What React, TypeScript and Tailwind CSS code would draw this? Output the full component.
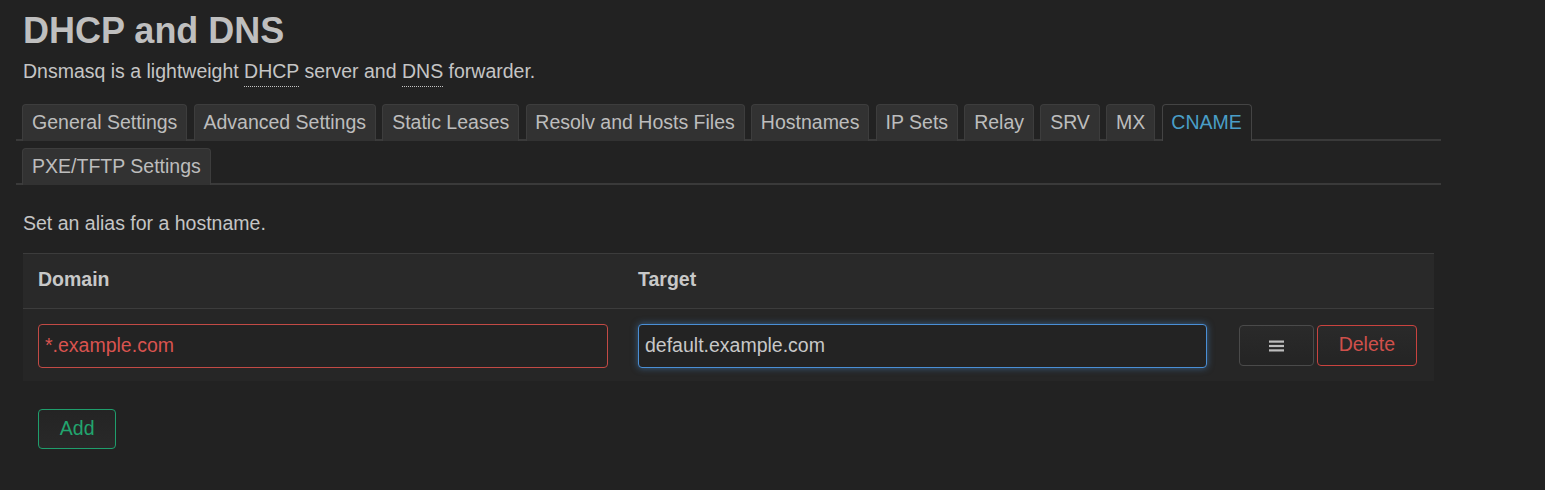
import React from "react";

const row1 = [
  "General Settings",
  "Advanced Settings",
  "Static Leases",
  "Resolv and Hosts Files",
  "Hostnames",
  "IP Sets",
  "Relay",
  "SRV",
  "MX",
  "CNAME",
];

function Tab({ label, active }: { label: string; active?: boolean }) {
  return (
    <div
      className={
        active
          ? "-mb-[2px] rounded-t-[4px] border border-b-0 border-[#444444] bg-[#222222] px-[8.8px] pt-[3px] pb-[3.8px] text-[#4a9ec7] whitespace-nowrap"
          : "-mb-[2px] rounded-t-[4px] border border-b-0 border-[#3d3d3d] bg-[#323232] px-[8.8px] pt-[3px] pb-[3.8px] text-[#bdbdbd] whitespace-nowrap"
      }
    >
      {label}
    </div>
  );
}

function Abbr({ children }: { children: React.ReactNode }) {
  return (
    <span className="border-b border-dotted border-[#c5c5c5] pb-[4px]">{children}</span>
  );
}

export default function App() {
  return (
    <div className="min-h-screen bg-[#222222] font-['Liberation_Sans',Arial,sans-serif] text-[19.5px] leading-[1.5] text-[#c5c5c5]">
      <div className="ml-[16px] w-[1425px]">
        <h2 className="px-[7px] pt-[10.5px] text-[36px] font-bold leading-[40px] text-[#bfbfbf]">
          DHCP and DNS
        </h2>
        <p className="mt-[6px] px-[7px]">
          Dnsmasq is a lightweight <Abbr>DHCP</Abbr> server and <Abbr>DNS</Abbr> forwarder.
        </p>

        <div className="mt-[18.5px]">
          <div className="flex items-end gap-[6.5px] border-b-2 border-[#3a3a3a] pl-[6.3px]">
            {row1.map((t) => (
              <Tab key={t} label={t} active={t === "CNAME"} />
            ))}
          </div>
          <div className="mt-[6.3px] flex items-end gap-[6.5px] border-b-2 border-[#3a3a3a] pl-[6.3px]">
            <Tab label="PXE/TFTP Settings" />
          </div>
        </div>

        <div className="px-[7px]">
          <p className="mt-[24.8px]">Set an alias for a hostname.</p>

          <div className="mt-[14.15px] w-[1411px]">
            <div className="grid grid-cols-[600px_599px_212px] border-y border-[#3c3c3c] bg-[#292929] font-bold text-[#c8c8c8]">
              <div className="px-[15px] pt-[11px] pb-[13.5px]">Domain</div>
              <div className="px-[15px] pt-[11px] pb-[13.5px]">Target</div>
              <div />
            </div>
            <div className="grid grid-cols-[600px_599px_212px] items-center bg-[#262626] pt-[15px] pb-[13.7px]">
              <div className="px-[15px]">
                <input
                  readOnly
                  defaultValue="*.example.com"
                  className="h-[44px] w-full rounded-[4px] border border-[#c24a45] bg-[#232323] px-[6px] pb-[1px] text-[19.5px] text-[#d9534f] outline-none"
                />
              </div>
              <div className="px-[15px]">
                <input
                  readOnly
                  defaultValue="default.example.com"
                  className="h-[44px] w-full rounded-[4px] border border-[#4a8fd6] bg-[#232323] px-[6px] pb-[1px] text-[19.5px] text-[#c8c8c8] outline-none shadow-[0_0_7px_rgba(74,143,214,0.55)]"
                />
              </div>
              <div className="flex items-center justify-end gap-[3.3px] pr-[17.3px]">
                <button className="flex h-[40.7px] w-[74.7px] items-center justify-center rounded-[4px] border border-[#4a4a4a] bg-gradient-to-b from-[#2a2a2a] to-[#242424]">
                  <svg width="15" height="12" viewBox="0 0 15 12">
                    <rect x="0" y="0.5" width="15" height="2.2" fill="#bdbdbd" />
                    <rect x="0" y="4.9" width="15" height="2.2" fill="#bdbdbd" />
                    <rect x="0" y="9.3" width="15" height="2.2" fill="#bdbdbd" />
                  </svg>
                </button>
                <button className="flex h-[40.7px] w-[99.7px] items-center justify-center rounded-[4px] border border-[#c9433f] bg-gradient-to-b from-[#2a2a2a] to-[#242424] pb-[1px] text-[#d0504b]">
                  Delete
                </button>
              </div>
            </div>
          </div>

          <button className="mt-[27.6px] ml-[15px] flex h-[40px] w-[78.4px] items-center justify-center rounded-[4px] border border-[#1f9e6c] bg-gradient-to-b from-[#242424] to-[#292929] pb-[1px] text-[#22a56e]">
            Add
          </button>
        </div>
      </div>
    </div>
  );
}
